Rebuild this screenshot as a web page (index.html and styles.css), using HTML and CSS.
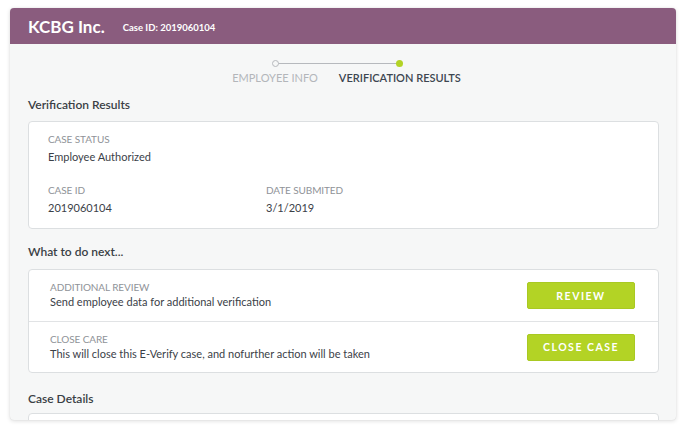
FILE: index.html
```html
<!DOCTYPE html>
<html>
<head>
<meta charset="utf-8">
<link rel="stylesheet" href="styles.css">
</head>
<body>
<div class="card">
  <div class="header">
    <span class="company">KCBG Inc.</span>
    <span class="caseid">Case ID: 2019060104</span>
  </div>
  <div class="content">
    <div class="stepper">
      <div class="step">
        <span class="dot dot-empty"></span>
        <span class="step-label">EMPLOYEE INFO</span>
      </div>
      <div class="step step-active">
        <span class="dot dot-filled"></span>
        <span class="step-label">VERIFICATION RESULTS</span>
      </div>
    </div>

    <h2 class="section-title">Verification Results</h2>
    <div class="box results">
      <div class="field">
        <div class="label">CASE STATUS</div>
        <div class="value">Employee Authorized</div>
      </div>
      <div class="field-row">
        <div class="field col">
          <div class="label">CASE ID</div>
          <div class="value">2019060104</div>
        </div>
        <div class="field col">
          <div class="label">DATE SUBMITED</div>
          <div class="value">3/1/2019</div>
        </div>
      </div>
    </div>

    <h2 class="section-title">What to do next...</h2>
    <div class="box actions">
      <div class="action">
        <div class="action-text">
          <div class="label">ADDITIONAL REVIEW</div>
          <div class="value">Send employee data for additional verification</div>
        </div>
        <button class="btn">REVIEW</button>
      </div>
      <div class="action">
        <div class="action-text">
          <div class="label">CLOSE CARE</div>
          <div class="value">This will close this E-Verify case, and nofurther action will be taken</div>
        </div>
        <button class="btn">CLOSE CASE</button>
      </div>
    </div>

    <h2 class="section-title">Case Details</h2>
    <div class="box details"></div>
  </div>
</div>
</body>
</html>
```

FILE: styles.css
```css
* { box-sizing: border-box; }
html, body { margin: 0; padding: 0; background: #ffffff; }
body {
  font-family: Lato, "Open Sans", sans-serif;
  color: #3b4148;
  padding: 8px 10px 0 10px;
  height: 432px;
  overflow: hidden;
}
.card {
  width: 666px;
  height: 412px;
  background: #f6f7f7;
  border-radius: 4px;
  box-shadow: 0 1px 4px rgba(0,0,0,0.14), 0 0 1px rgba(0,0,0,0.12);
  overflow: hidden;
}
.header {
  height: 36px;
  background: #8a5c7e;
  display: flex;
  align-items: center;
  padding-left: 18px;
  color: #ffffff;
}
.company {
  font-size: 17px;
  font-weight: 700;
  letter-spacing: 0;
}
.caseid {
  font-size: 9.5px;
  font-weight: 700;
  margin-left: 18px;
  margin-top: 2px;
}
.content {
  padding: 0 17px 0 18px;
}
.stepper {
  display: flex;
  justify-content: center;
  gap: 21px;
  padding-top: 16px;
  padding-left: 6px;
}
.step {
  display: flex;
  flex-direction: column;
  align-items: center;
  position: relative;
}
.dot {
  width: 7px;
  height: 7px;
  border-radius: 50%;
  display: block;
  position: relative;
  z-index: 1;
}
.dot-empty {
  border: 1px solid #b6b9bd;
  background: #f6f7f7;
}
.dot-filled {
  background: #b3d325;
}
.step-active::before {
  content: "";
  position: absolute;
  top: 3px;
  right: 50%;
  width: 124px;
  height: 1px;
  background: #b6b9bd;
}
.step-label {
  font-size: 11px;
  margin-top: 4px;
  color: #b3b6ba;
  letter-spacing: 0;
}
.step-active .step-label {
  color: #3d4650;
  font-weight: 600;
}
.section-title {
  font-size: 12px;
  font-weight: 600;
  margin: 0;
  color: #3a3f45;
  line-height: 16px;
}
.stepper + .section-title { margin-top: 13px; }
.box {
  background: #ffffff;
  border: 1px solid #dcdfe1;
  border-radius: 4px;
}
.results {
  margin-top: 8px;
  height: 108px;
  padding: 10px 19px 0 19px;
}
.field-row {
  display: flex;
  margin-top: 19px;
}
.col { width: 218px; }
.label {
  font-size: 10px;
  color: #8f9398;
  line-height: 14px;
  letter-spacing: -0.1px;
}
.value {
  font-size: 11px;
  color: #3b4148;
  line-height: 14px;
  margin-top: 4px;
}
.results + .section-title { margin-top: 15px; }
.actions {
  margin-top: 9px;
}
.action {
  display: flex;
  align-items: center;
  justify-content: space-between;
  height: 51px;
  padding: 0 23px 0 21px;
}
.action + .action {
  border-top: 1px solid #e1e3e5;
  height: 51px;
}
.action .value { margin-top: 1px; }
.action-text { padding-bottom: 2px; }
.btn {
  width: 108px;
  height: 27px;
  background: #b3d325;
  border: 1px solid #a9c922;
  border-radius: 2px;
  color: #ffffff;
  font-family: Lato, "Open Sans", sans-serif;
  font-size: 10.5px;
  font-weight: 700;
  letter-spacing: 1.5px;
  padding: 0;
}
.actions + .section-title { margin-top: 18px; }
.details {
  margin-top: 6px;
  height: 40px;
}
```
